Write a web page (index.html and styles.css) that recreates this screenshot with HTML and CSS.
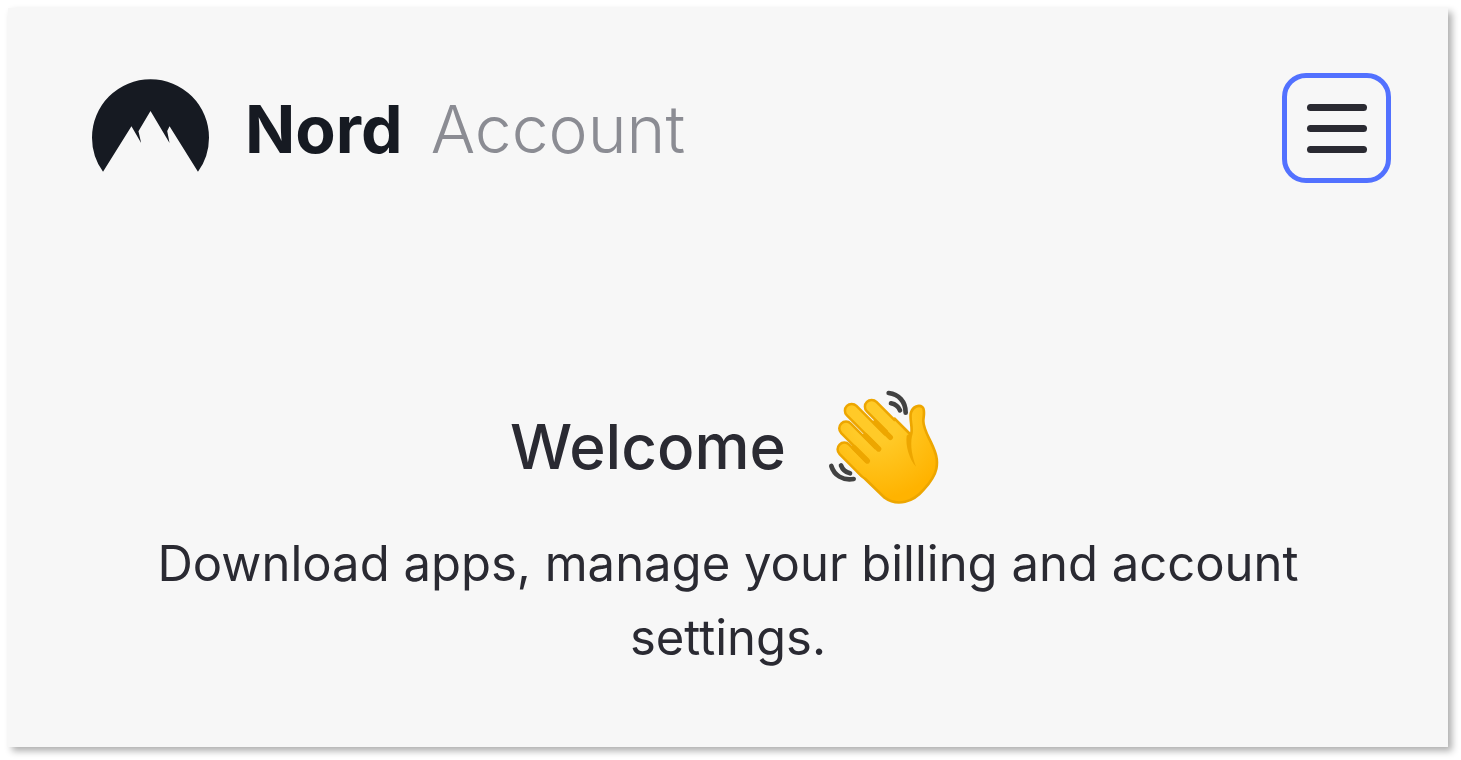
FILE: index.html
```
<!DOCTYPE html>
<html lang="en">
<head>
  <meta charset="UTF-8" />
  <meta name="viewport" content="width=device-width, initial-scale=1.0"/>
  <title>Nord Account</title>
  <link rel="stylesheet" href="styles.css">
</head>
<body>
  <div class="page">
    <header class="header">
      <a class="brand" href="#">
        <svg class="brand-logo" viewBox="36 57 350 277" aria-hidden="true">
          <path fill="#161a22" d="M69 334A175 175 0 0 1 36 232a175 175 0 0 1 350 0 175 175 0 0 1-33 102L268 198l-7 14 7 36-57-96-36 61 8 35-29-50z"/>
        </svg>
        <span class="brand-name">Nord</span>
        <span class="brand-product">Account</span>
      </a>
      <button class="menu-button" type="button" aria-label="Menu">
        <span></span>
        <span></span>
        <span></span>
      </button>
    </header>

    <main class="welcome">
      <div class="welcome-heading">
        <h1>Welcome</h1>
        <svg class="wave" viewBox="50 40 336 348" aria-hidden="true">
          <defs>
            <radialGradient id="skin" gradientUnits="userSpaceOnUse" cx="190" cy="130" r="240">
              <stop offset="0.3" stop-color="#ffca28"/>
              <stop offset="1" stop-color="#ffb300"/>
            </radialGradient>
          </defs>
          <!-- finger outlines -->
          <g fill="none" stroke="#eda600" stroke-width="48" stroke-linecap="round">
            <path d="M181 93L270 182"/>
            <path d="M121 105L240 224"/>
            <path d="M104 158L200 254"/>
            <path d="M99 221L165 287"/>
          </g>
          <!-- palm and thumb -->
          <path fill="url(#skin)" stroke="#eda600" stroke-width="8" stroke-linejoin="round" d="M220 366L140 289L250 129L299 178C306 157 293 129 299 110C305 92 323 87 333 94C342 100 337 119 336 134C335 155 347 175 359 200C372 228 381 249 375 279C370 304 354 323 337 342C306 379 258 394 220 366Z"/>
          <g fill="none" stroke="url(#skin)" stroke-width="33" stroke-linecap="round">
            <path d="M181 93L270 182"/>
            <path d="M121 105L240 224"/>
            <path d="M104 158L200 254"/>
            <path d="M99 221L167 289"/>
          </g>
          <!-- gaps between the fingers -->
          <g fill="none" stroke="#eda600" stroke-width="16" stroke-linecap="round">
            <path d="M192 140L237 185"/>
            <path d="M162 180L202 220"/>
            <path d="M128 216L168 256"/>
          </g>
          <path fill="#eda600" d="M286 180Q292 171 302 180C296 211 303 243 314 273C294 250 282 211 286 180Z"/>
          <!-- motion lines -->
          <g fill="none" stroke="#424242" stroke-width="14" stroke-linecap="round">
            <path d="M232 52C262 56 283 77 283 111"/>
            <path d="M239 83Q259 87 266 104"/>
            <path d="M60 271C68 298 94 316 127 310"/>
            <path d="M89 269Q96 288 116 293"/>
          </g>
        </svg>
      </div>
      <p class="welcome-text">Download apps, manage your billing and account settings.</p>
    </main>
  </div>
</body>
</html>
```
FILE: styles.css
```
:root {
  --bg: #f7f7f7;
  --text: #2a2a32;
  --brand: #161a22;
  --muted: #8b8c93;
  --accent: #5271ff;
}

* {
  box-sizing: border-box;
}

body {
  margin: 0;
  padding: 8px 13px 13px 8px;
  font-family: Inter, "Liberation Sans", sans-serif;
  background: #fff;
  color: var(--text);
}

.page {
  background: var(--bg);
  box-shadow: 4px 4px 7px rgba(0, 0, 0, 0.32);
  padding-bottom: 72px;
}

.header {
  display: flex;
  justify-content: space-between;
  align-items: flex-start;
  padding: 65px 57px 0 84px;
}

.brand {
  display: flex;
  align-items: flex-start;
  padding-top: 6px;
  color: var(--brand);
  font-size: 66px;
  line-height: 100px;
  text-decoration: none;
}

.brand-logo {
  width: 117px;
  height: 93px;
  margin-right: 36px;
}

.brand-name {
  font-weight: 700;
  margin-right: 28px;
}

.brand-product {
  color: var(--muted);
  font-weight: 300;
}

.menu-button {
  display: flex;
  flex-direction: column;
  justify-content: center;
  align-items: center;
  gap: 14px;
  width: 109px;
  height: 110px;
  padding: 0;
  background: none;
  border: 5px solid var(--accent);
  border-radius: 24px;
  cursor: pointer;
}

.menu-button span {
  width: 60px;
  height: 7px;
  border-radius: 4px;
  background: var(--text);
}

.welcome {
  padding: 206px 80px 0;
  text-align: center;
}

.welcome-heading {
  display: flex;
  justify-content: center;
  align-items: center;
  gap: 42px;
  padding-right: 6px;
}

.welcome-heading h1 {
  margin: 0;
  font-size: 62px;
  font-weight: 500;
  line-height: 80px;
}

.wave {
  width: 112px;
  height: 116px;
}

.welcome-text {
  margin: 22px 0 0;
  font-size: 49px;
  line-height: 74px;
}
```
